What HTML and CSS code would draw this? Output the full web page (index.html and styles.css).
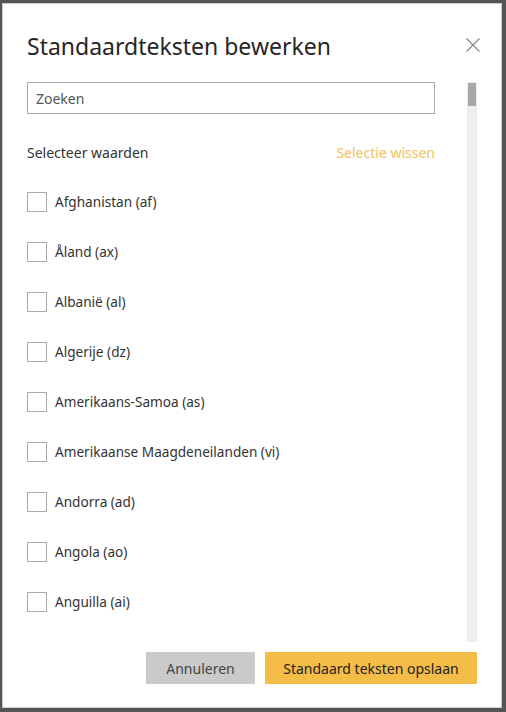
FILE: index.html
```html
<!DOCTYPE html>
<html lang="nl">
<head>
<meta charset="utf-8">
<title>Standaardteksten bewerken</title>
<link rel="stylesheet" href="styles.css">
</head>
<body>
<div class="backdrop">
  <div class="dialog">
    <div class="dialog-header">
      <h1 class="dialog-title">Standaardteksten bewerken</h1>
      <button class="close-btn" aria-label="Sluiten">
        <svg width="14" height="14" viewBox="0 0 14 14"><path d="M0.5 0.5 L13.5 13.5 M13.5 0.5 L0.5 13.5" stroke="#8a8a8a" stroke-width="1.3" fill="none"/></svg>
      </button>
    </div>
    <div class="dialog-body">
      <div class="content">
        <input class="search" type="text" placeholder="Zoeken">
        <div class="select-head">
          <span class="select-label">Selecteer waarden</span>
          <span class="clear-link">Selectie wissen</span>
        </div>
        <ul class="options">
          <li class="option"><span class="box"></span><span class="opt-label">Afghanistan (af)</span></li>
          <li class="option"><span class="box"></span><span class="opt-label">Åland (ax)</span></li>
          <li class="option"><span class="box"></span><span class="opt-label">Albanië (al)</span></li>
          <li class="option"><span class="box"></span><span class="opt-label">Algerije (dz)</span></li>
          <li class="option"><span class="box"></span><span class="opt-label">Amerikaans-Samoa (as)</span></li>
          <li class="option"><span class="box"></span><span class="opt-label">Amerikaanse Maagdeneilanden (vi)</span></li>
          <li class="option"><span class="box"></span><span class="opt-label">Andorra (ad)</span></li>
          <li class="option"><span class="box"></span><span class="opt-label">Angola (ao)</span></li>
          <li class="option"><span class="box"></span><span class="opt-label">Anguilla (ai)</span></li>
        </ul>
      </div>
      <div class="scrollbar"><div class="thumb"></div></div>
    </div>
    <div class="dialog-footer">
      <button class="btn btn-cancel">Annuleren</button>
      <button class="btn btn-primary">Standaard teksten opslaan</button>
    </div>
  </div>
</div>
</body>
</html>
```
FILE: styles.css
```css
* { box-sizing: border-box; }
html, body { margin: 0; padding: 0; }
body {
  width: 506px;
  height: 712px;
  background: #555555;
  font-family: "Noto Sans", "Open Sans", sans-serif;
  overflow: hidden;
}
.backdrop {
  padding: 3px 4px 4px 2px;
  height: 712px;
}
.dialog {
  height: 705px;
  background: #ffffff;
  border: 1px solid #cfcfcf;
  display: flex;
  flex-direction: column;
}
.dialog-header {
  height: 78px;
  padding: 0 21px 0 24px;
  display: flex;
  align-items: flex-start;
  justify-content: space-between;
}
.dialog-title {
  margin: 26px 0 0 0;
  font-size: 23px;
  line-height: 32px;
  font-weight: 400;
  color: #262626;
}
.close-btn {
  margin-top: 34px;
  border: 0;
  padding: 0;
  background: none;
  width: 14px;
  height: 14px;
  display: block;
}
.close-btn svg { display: block; }
.dialog-body {
  height: 560px;
  display: flex;
  padding: 0 24px 0 24px;
  gap: 32px;
}
.content {
  width: 408px;
  overflow: hidden;
}
.search {
  display: block;
  width: 408px;
  height: 32px;
  border: 1px solid #a9a9a9;
  padding: 0 8px;
  font-family: inherit;
  font-size: 14px;
  color: #333;
  outline: none;
}
.search::placeholder { color: #555; }
.select-head {
  margin-top: 29px;
  display: flex;
  justify-content: space-between;
  font-size: 14px;
  line-height: 20px;
}
.select-label { color: #333; }
.clear-link { color: #f5c15b; }
.options {
  list-style: none;
  margin: 29px 0 0 0;
  padding: 0;
}
.option {
  height: 50px;
  display: flex;
  align-items: flex-start;
}
.box {
  width: 20px;
  height: 20px;
  border: 1px solid #ababab;
  flex: none;
}
.opt-label {
  margin-left: 8px;
  font-size: 13.6px;
  line-height: 20px;
  color: #333;
}
.scrollbar {
  width: 10px;
  height: 560px;
  background: #eeeeee;
  padding: 1px;
}
.thumb {
  height: 23px;
  background: #a8a8a8;
}
.dialog-footer {
  margin-top: 10px;
  padding: 0 24px;
  display: flex;
  justify-content: flex-end;
  gap: 10px;
}
.btn {
  height: 32px;
  border: 0;
  font-family: inherit;
  font-size: 14px;
  padding: 0;
  white-space: nowrap;
}
.btn-cancel {
  width: 109px;
  background: #cacaca;
  color: #444;
}
.btn-primary {
  width: 212px;
  background: #f4bd48;
  color: #222;
}
```
